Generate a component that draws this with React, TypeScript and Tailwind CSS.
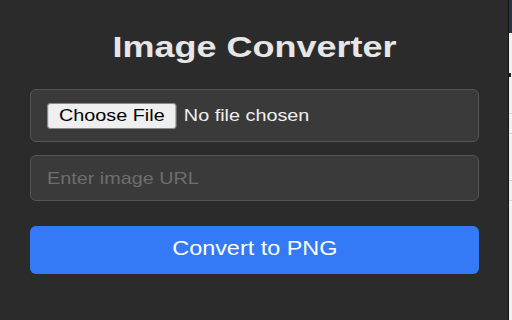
import { useState } from 'react';

export default function App() {
  const [url, setUrl] = useState('');
  const [fileName, setFileName] = useState('');

  return (
    <div className="flex h-[320px] w-[512px] overflow-hidden bg-[#2b2b2b] font-['Liberation_Sans',Arial,sans-serif]">
      <main className="flex flex-1 flex-col pl-[30px] pr-[29px] pt-[30px]">
        <h1 className="scale-x-[1.2] text-center text-[30px] font-bold leading-[33px] text-[#e6e6e6]">
          Image Converter
        </h1>

        <label className="mt-[26px] flex h-[53px] cursor-pointer items-center rounded-[6px] border border-[#555555] bg-[#3a3a3a] pl-[16px]">
          <input
            type="file"
            accept="image/*"
            className="hidden"
            onChange={(e) => setFileName(e.target.files?.[0]?.name ?? '')}
          />
          <div className="flex origin-left scale-x-[1.2] items-center text-[16.5px]">
            <span className="flex h-[26px] items-center rounded-[3px] border border-[#8a8a8a] bg-[#efefef] px-[9px] text-black">
              Choose File
            </span>
            <span className="ml-[6px] text-[#f0f0f0]">{fileName || 'No file chosen'}</span>
          </div>
        </label>

        <div className="mt-[13px] flex h-[46px] items-center rounded-[6px] border border-[#555555] bg-[#3a3a3a] pl-[16px]">
          <input
            type="text"
            value={url}
            onChange={(e) => setUrl(e.target.value)}
            placeholder="Enter image URL"
            className="h-full w-[83%] origin-left scale-x-[1.2] bg-transparent text-[16.5px] text-[#e6e6e6] outline-none placeholder:text-[#6e6e6e]"
          />
        </div>

        <button className="mt-[25px] flex h-[48px] items-center justify-center rounded-[6px] bg-[#3479f5] pb-[2px] text-white">
          <span className="scale-x-[1.2] text-[19.5px] leading-none">Convert to PNG</span>
        </button>
      </main>

      {/* sliver of the page behind the popup */}
      <div className="flex w-[4px] flex-col border-l border-[#151515]">
        <div className="h-[33px] bg-[#2b3445]" />
        <div className="flex flex-1 flex-col bg-[#f2f2f2]">
          <div className="mt-[40px] h-[4px] w-[2px] bg-[#222222]" />
          <div className="mt-[36px] h-px bg-[#d6d6d6]" />
          <div className="mt-[19px] h-px bg-[#d6d6d6]" />
          <div className="mt-[46px] h-px bg-[#cfcfcf]" />
          <div className="mt-[19px] h-px bg-[#d6d6d6]" />
        </div>
      </div>
    </div>
  );
}
